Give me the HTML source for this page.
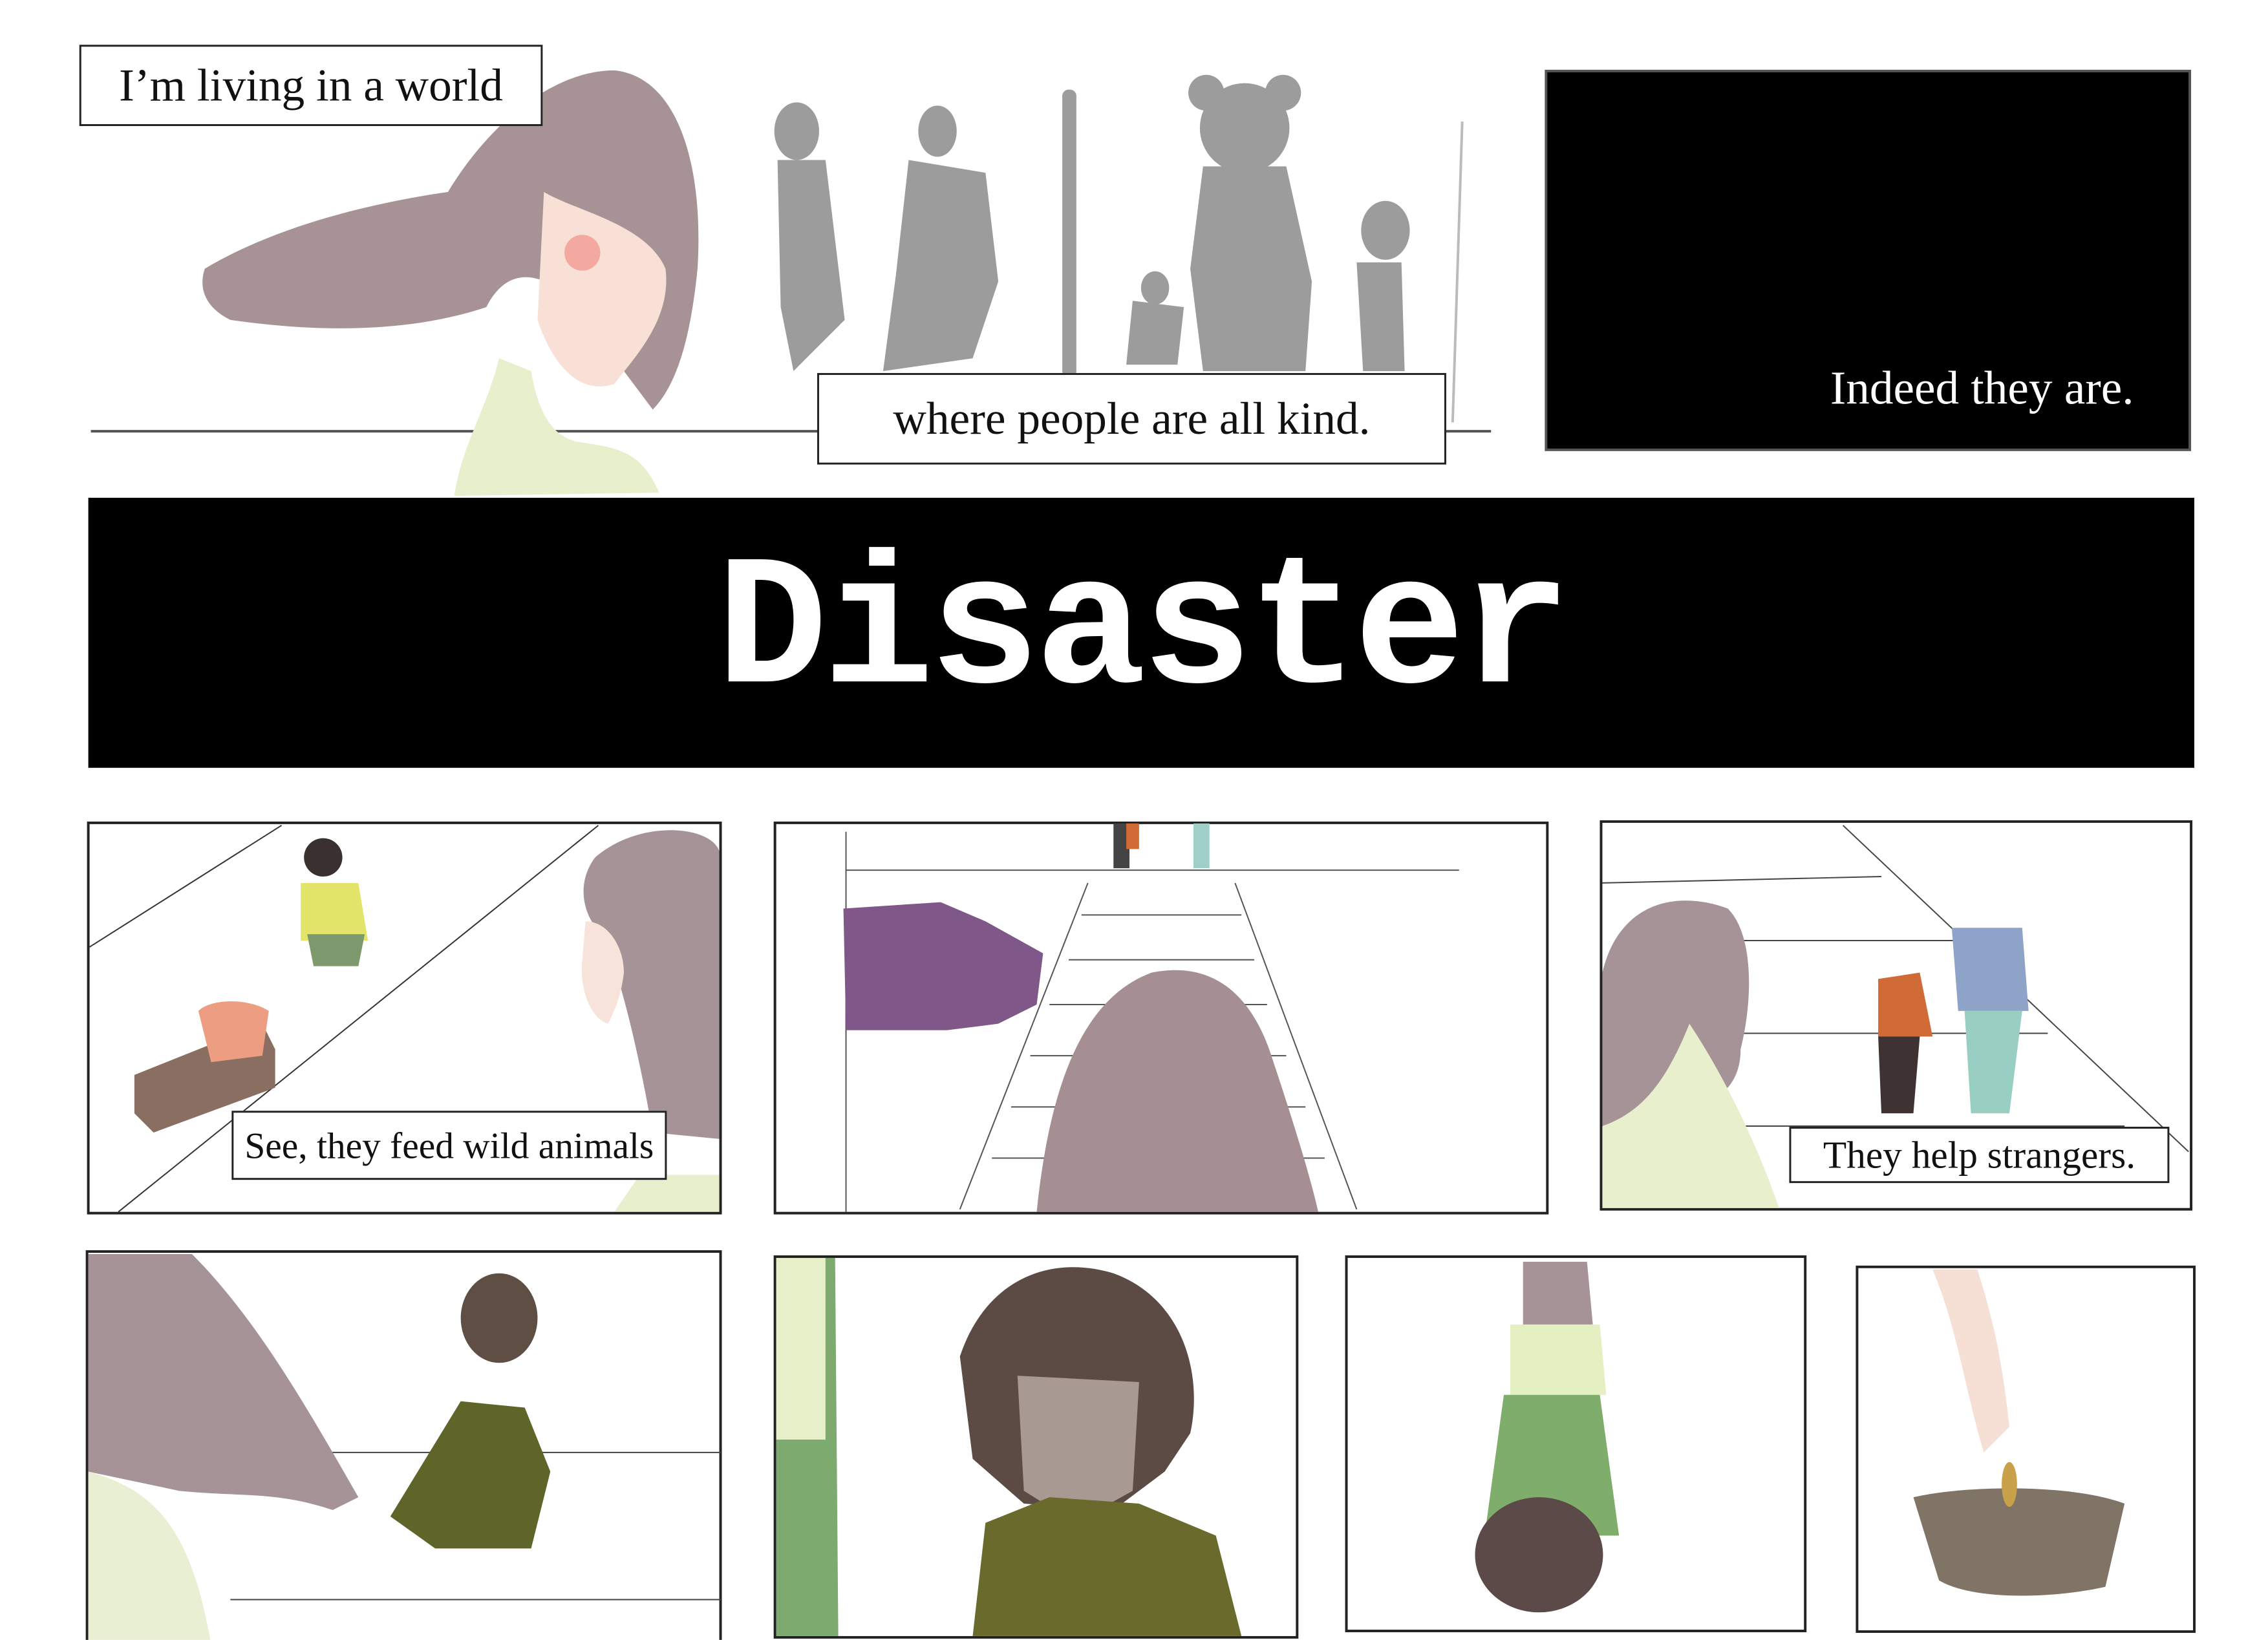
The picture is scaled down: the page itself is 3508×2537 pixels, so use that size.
<!DOCTYPE html>
<html><head><meta charset="utf-8"><style>
html,body{margin:0;padding:0;background:#fff;}
body{width:3508px;height:2537px;overflow:hidden;position:relative;}
#w{position:absolute;left:0;top:0;width:3544px;height:2563px;transform:scale(0.9898);transform-origin:0 0;}
svg{position:absolute;left:0;top:0;}
.cap{position:absolute;background:#fff;border:3px solid #222;font-family:"Liberation Serif",serif;color:#111;display:flex;align-items:center;justify-content:center;box-sizing:border-box;white-space:nowrap;}
</style></head><body><div id="w">
<svg width="3544" height="2563" viewBox="0 0 3544 2563">
<line x1="142" y1="674" x2="2330" y2="674" stroke="#555" stroke-width="4"/>
<path d="M320 420 C420 360 560 320 700 300 C760 200 860 110 960 110 C1060 120 1100 260 1090 420 C1080 520 1060 600 1020 640 L960 560 C880 420 800 400 760 480 C640 520 500 520 360 500 C320 480 310 450 320 420Z" fill="#a79396"/>
<path d="M850 300 C900 330 1010 350 1040 420 C1050 500 990 560 960 600 C900 620 860 560 840 500 Z" fill="#f8e0d6"/>
<circle cx="910" cy="395" r="28" fill="#f3a8a0"/>
<path d="M780 560 L830 580 C840 640 860 680 900 690 C960 700 1000 700 1030 770 L710 775 C720 700 760 640 780 560Z" fill="#e8efcd"/>
<g fill="#9c9c9c">
<ellipse cx="1245" cy="205" rx="35" ry="45"/><path d="M1215 250 L1290 250 L1320 500 L1260 560 L1240 580 L1220 480Z"/>
<ellipse cx="1465" cy="205" rx="30" ry="40"/><path d="M1420 250 L1540 270 L1560 440 L1520 560 L1380 580 L1400 430Z"/>
<rect x="1660" y="140" width="22" height="450" rx="10"/>
<ellipse cx="1945" cy="200" rx="70" ry="70"/><circle cx="1885" cy="145" r="28"/><circle cx="2005" cy="145" r="28"/>
<path d="M1880 260 L2010 260 L2050 440 L2040 580 L1880 580 L1860 420Z"/>
<ellipse cx="1805" cy="450" rx="22" ry="26"/><path d="M1770 470 L1850 480 L1840 570 L1760 570Z"/>
<ellipse cx="2165" cy="360" rx="38" ry="46"/><path d="M2120 410 L2190 410 L2195 580 L2130 580Z"/>
</g>
<line x1="2285" y1="190" x2="2270" y2="660" stroke="#bbb" stroke-width="4"/>
<rect x="2416" y="111" width="1006" height="592" fill="#000" stroke="#555" stroke-width="4"/>
<rect x="138" y="778" width="3291" height="422" fill="#000"/>
<rect x="138" y="1286" width="988" height="610" fill="#fff" stroke="#222" stroke-width="4"/>
<line x1="140" y1="1480" x2="440" y2="1290" stroke="#333" stroke-width="2"/>
<line x1="185" y1="1894" x2="935" y2="1290" stroke="#333" stroke-width="2"/>
<path d="M930 1340 C1000 1280 1110 1290 1124 1330 L1124 1780 L1020 1770 C990 1600 960 1500 940 1460 C910 1430 900 1380 930 1340Z" fill="#a69397"/>
<path d="M915 1440 C950 1440 975 1480 975 1520 C970 1560 960 1580 950 1600 C920 1590 905 1540 910 1500Z" fill="#f8e3da"/>
<path d="M1000 1836 L1124 1836 L1124 1894 L960 1894Z" fill="#e8efcd"/>
<path d="M210 1680 L410 1600 L430 1640 L430 1700 L240 1770 L210 1740Z" fill="#8a6e62"/>
<path d="M310 1580 C330 1560 390 1560 420 1580 L410 1650 L330 1660Z" fill="#ed9e82"/>
<circle cx="505" cy="1340" r="30" fill="#3a3030"/>
<path d="M470 1380 L560 1380 L575 1470 L470 1470Z" fill="#e2e56a"/>
<path d="M480 1460 L570 1460 L560 1510 L490 1510Z" fill="#7c9a6e"/>
<rect x="1211" y="1286" width="1207" height="610" fill="#fff" stroke="#222" stroke-width="4"/>
<line x1="1322" y1="1360" x2="2280" y2="1360" stroke="#555" stroke-width="2"/>
<line x1="1322" y1="1300" x2="1322" y2="1894" stroke="#555" stroke-width="2"/>
<g stroke="#555" stroke-width="2"><line x1="1700" y1="1380" x2="1500" y2="1890"/><line x1="1930" y1="1380" x2="2120" y2="1890"/>
<line x1="1690" y1="1430" x2="1940" y2="1430"/><line x1="1670" y1="1500" x2="1960" y2="1500"/><line x1="1640" y1="1570" x2="1980" y2="1570"/><line x1="1610" y1="1650" x2="2010" y2="1650"/><line x1="1580" y1="1730" x2="2040" y2="1730"/><line x1="1550" y1="1810" x2="2070" y2="1810"/></g>
<path d="M1318 1420 L1470 1410 L1540 1440 L1630 1490 L1620 1570 L1560 1600 L1480 1610 L1322 1610Z" fill="#7f5788"/>
<rect x="1740" y="1287" width="25" height="70" fill="#444"/><rect x="1760" y="1287" width="20" height="40" fill="#d06a37"/><rect x="1865" y="1287" width="25" height="70" fill="#9fcfc7"/>
<path d="M1620 1894 C1640 1700 1690 1560 1800 1520 C1900 1500 1960 1560 1990 1660 C2030 1780 2050 1850 2060 1894Z" fill="#a58f93"/>
<rect x="2502" y="1284" width="922" height="606" fill="#fff" stroke="#222" stroke-width="4"/>
<g stroke="#444" stroke-width="2"><line x1="2504" y1="1380" x2="2940" y2="1370"/><line x1="2880" y1="1290" x2="3420" y2="1800"/><line x1="2710" y1="1470" x2="3100" y2="1470"/><line x1="2720" y1="1615" x2="3200" y2="1615"/><line x1="2720" y1="1760" x2="3320" y2="1760"/></g>
<path d="M2504 1520 C2530 1410 2620 1390 2700 1420 C2740 1460 2740 1560 2720 1640 C2720 1700 2680 1720 2650 1730 L2504 1880Z" fill="#a69397"/>
<path d="M2640 1600 C2700 1690 2750 1800 2780 1888 L2504 1888 L2504 1760 C2560 1740 2600 1700 2640 1600Z" fill="#e8efcd"/>
<path d="M2935 1530 L3000 1520 L3020 1620 L2935 1620Z" fill="#d06a37"/><path d="M2935 1620 L3000 1620 L2990 1740 L2940 1740Z" fill="#3e3232"/>
<path d="M3050 1450 L3160 1450 L3170 1580 L3060 1580Z" fill="#8ea3c8"/><path d="M3070 1580 L3160 1580 L3140 1740 L3080 1740Z" fill="#98cfc2"/>
<rect x="136" y="1956" width="990" height="620" fill="#fff" stroke="#222" stroke-width="4"/>
<line x1="420" y1="2270" x2="1126" y2="2270" stroke="#444" stroke-width="2"/><line x1="360" y1="2500" x2="1126" y2="2500" stroke="#444" stroke-width="2"/>
<path d="M138 1960 L300 1960 C400 2060 480 2200 560 2340 L520 2360 C430 2330 380 2340 280 2330 L138 2300Z" fill="#a69397"/>
<path d="M138 2300 C250 2330 300 2400 330 2570 L138 2570Z" fill="#e9efd3"/>
<path d="M720 2190 L820 2200 L860 2300 L830 2420 L680 2420 L610 2370Z" fill="#5f6428"/>
<ellipse cx="780" cy="2060" rx="60" ry="70" fill="#5e4e44"/>
<rect x="1211" y="1964" width="816" height="595" fill="#fff" stroke="#222" stroke-width="4"/>
<path d="M1213 1966 L1305 1966 L1310 2557 L1213 2557Z" fill="#7daa6e"/><path d="M1213 1966 L1290 1966 L1290 2250 L1213 2250Z" fill="#e6efc8"/>
<path d="M1500 2120 C1540 2000 1640 1960 1740 1990 C1850 2030 1880 2150 1860 2240 L1820 2300 L1740 2360 L1600 2350 L1520 2280Z" fill="#5c4a44"/>
<path d="M1590 2150 L1780 2160 L1770 2330 L1680 2380 L1600 2330Z" fill="#a99993"/>
<path d="M1540 2380 L1640 2340 L1780 2350 L1900 2400 L1940 2557 L1520 2557Z" fill="#6a6a2c"/>
<rect x="2104" y="1964" width="717" height="585" fill="#fff" stroke="#222" stroke-width="4"/>
<path d="M2380 1972 L2480 1972 L2490 2080 L2380 2080Z" fill="#a69397"/>
<path d="M2360 2070 L2500 2070 L2510 2180 L2360 2180Z" fill="#e4efc2"/>
<path d="M2350 2180 L2500 2180 L2530 2400 L2320 2400Z" fill="#7fae6c"/>
<ellipse cx="2405" cy="2430" rx="100" ry="90" fill="#5b4a48"/>
<rect x="2902" y="1980" width="527" height="570" fill="#fff" stroke="#222" stroke-width="4"/>
<path d="M3020 1984 L3090 1984 C3120 2080 3130 2140 3140 2230 L3100 2270 C3070 2170 3060 2080 3020 1984Z" fill="#f6dfd5"/>
<path d="M2990 2340 C3080 2320 3240 2320 3320 2350 L3290 2480 C3200 2500 3080 2500 3030 2470Z" fill="#7f7466"/>
<ellipse cx="3140" cy="2320" rx="12" ry="35" fill="#c9a14a"/>
</svg>
<div class="cap" style="left:124px;top:70px;width:724px;height:127px;font-size:72px;">I’m living in a world</div>
<div class="cap" style="left:1277px;top:583px;width:983px;height:143px;font-size:72px;">where people are all kind.</div>
<div style="position:absolute;left:2860px;top:565px;font-family:'Liberation Serif',serif;font-size:74px;color:#fff;white-space:nowrap;">Indeed they are.</div>
<div style="position:absolute;left:138px;top:778px;width:3291px;height:422px;display:flex;align-items:center;justify-content:center;font-family:'Liberation Mono',monospace;font-weight:bold;font-size:290px;color:#fff;letter-spacing:-8px;">Disaster</div>
<div class="cap" style="left:362px;top:1736px;width:680px;height:108px;font-size:58px;">See, they feed wild animals</div>
<div class="cap" style="left:2796px;top:1761px;width:594px;height:88px;font-size:60px;">They help strangers.</div>
</div></body></html>
